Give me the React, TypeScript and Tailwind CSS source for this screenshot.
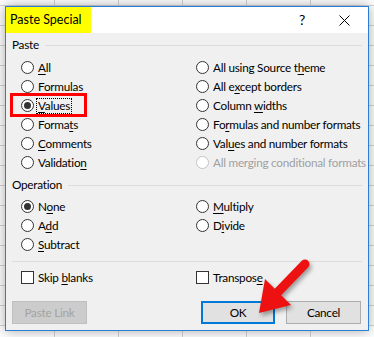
import React from "react";

type Opt = { pre: string; key?: string; post?: string; checked?: boolean; disabled?: boolean; focus?: boolean; boxed?: boolean };

function Label({ pre, keyChar, post }: { pre: string; keyChar?: string; post?: string }) {
  return (
    <>
      {pre}
      {keyChar && <u className="underline underline-offset-[2px] decoration-1">{keyChar}</u>}
      {post}
    </>
  );
}

function Radio({ opt }: { opt: Opt }) {
  return (
    <div className="relative flex items-center h-[19px]">
      {opt.boxed && (
        <span className="absolute left-[-11px] top-[-3px] w-[77px] h-[24px] border-[3px] border-[#ff0000] pointer-events-none" />
      )}
      <span
        className={
          "w-[13px] h-[13px] rounded-full border flex items-center justify-center bg-white shrink-0 " +
          (opt.disabled ? "border-[#c4c4c4]" : "border-[#333333]")
        }
      >
        {opt.checked && <span className="w-[7px] h-[7px] rounded-full bg-[#333333]" />}
      </span>
      <span
        className={
          "ml-[2px] px-[1px] leading-[14px] whitespace-nowrap border border-dotted " +
          (opt.focus ? "border-black" : "border-transparent") +
          (opt.disabled ? " text-[#a0a0a0]" : " text-black")
        }
      >
        <Label pre={opt.pre} keyChar={opt.key} post={opt.post} />
      </span>
    </div>
  );
}

function Group({ title, children }: { title: string; children: React.ReactNode }) {
  return (
    <div>
      <div className="flex items-center h-[16px]">
        <span className="text-black pr-[6px]">{title}</span>
        <span className="flex-1 h-px bg-[#dcdcdc]" />
      </div>
      {children}
    </div>
  );
}

const pasteLeft: Opt[] = [
  { pre: "", key: "A", post: "ll" },
  { pre: "", key: "F", post: "ormulas" },
  { pre: "", key: "V", post: "alues", checked: true, focus: true, boxed: true },
  { pre: "Forma", key: "t", post: "s" },
  { pre: "", key: "C", post: "omments" },
  { pre: "Validatio", key: "n", post: "" },
];

const pasteRight: Opt[] = [
  { pre: "All using Source t", key: "h", post: "eme" },
  { pre: "All e", key: "x", post: "cept borders" },
  { pre: "Column ", key: "w", post: "idths" },
  { pre: "Fo", key: "r", post: "mulas and number formats" },
  { pre: "Val", key: "u", post: "es and number formats" },
  { pre: "All merging conditional formats", disabled: true },
];

const opLeft: Opt[] = [
  { pre: "N", key: "o", post: "ne", checked: true },
  { pre: "A", key: "d", post: "d" },
  { pre: "", key: "S", post: "ubtract" },
];

const opRight: Opt[] = [
  { pre: "", key: "M", post: "ultiply" },
  { pre: "D", key: "i", post: "vide" },
];

function Checkbox({ pre, k, post }: { pre: string; k: string; post: string }) {
  return (
    <div className="flex items-center h-[19px]">
      <span className="w-[13px] h-[13px] border border-[#333333] bg-white shrink-0" />
      <span className="ml-[4px] text-black whitespace-nowrap">
        <Label pre={pre} keyChar={k} post={post} />
      </span>
    </div>
  );
}

export default function App() {
  return (
    <div
      className="relative w-[374px] h-[337px] overflow-hidden bg-white pl-[5px] pt-[6px] bg-[linear-gradient(to_right,#d6d6d6_1px,transparent_1px),linear-gradient(to_bottom,#d6d6d6_1px,transparent_1px)] bg-[length:64px_20px] bg-[position:54px_5px]"
      style={{ fontFamily: 'Lato, "Liberation Sans", sans-serif' }}
    >
      <div className="w-[364px] h-[325px] border border-[#2a7fd4] bg-[#f0f0f0] shadow-[0_0_12px_rgba(0,0,0,0.35)] text-[11.75px] tracking-[-0.25px] flex flex-col">
        {/* title bar */}
        <div className="h-[26px] bg-white flex items-center shrink-0">
          <div className="h-full w-[85px] bg-[#ffff00] flex items-center pl-[4px] text-[12.5px] tracking-normal text-black whitespace-nowrap">Paste Special</div>
          <div className="flex-1" />
          <span className="text-[14px] text-black mr-[34px] leading-none">?</span>
          <svg width="11" height="11" viewBox="0 0 11 11" className="mr-[18px]">
            <path d="M0.5 0.5 L10.5 10.5 M10.5 0.5 L0.5 10.5" stroke="#000" strokeWidth="1" />
          </svg>
        </div>

        {/* body */}
        <div className="px-[6px] pt-[4px] flex flex-col">
          <Group title="Paste">
            <div className="grid grid-cols-[175px_1fr] pl-[9px] mt-[5px]">
              <div>{pasteLeft.map((o, i) => <Radio key={i} opt={o} />)}</div>
              <div>{pasteRight.map((o, i) => <Radio key={i} opt={o} />)}</div>
            </div>
          </Group>

          <div className="mt-[5px]">
            <Group title="Operation">
              <div className="grid grid-cols-[175px_1fr] pl-[9px] mt-[4px]">
                <div>{opLeft.map((o, i) => <Radio key={i} opt={o} />)}</div>
                <div>{opRight.map((o, i) => <Radio key={i} opt={o} />)}</div>
              </div>
            </Group>
          </div>

          <div className="h-px bg-[#dcdcdc] mt-[7px]" />

          <div className="grid grid-cols-[175px_1fr] pl-[9px] mt-[6px]">
            <Checkbox pre="Skip " k="b" post="lanks" />
            <Checkbox pre="Transpos" k="e" post="" />
          </div>

          <div className="flex items-center justify-between mt-[14px] pr-[1px]">
            <button className="w-[75px] h-[23px] bg-[#cccccc] border border-[#bfbfbf] text-[#a3a3a3] text-[11.75px]">
              Paste Link
            </button>
            <div className="flex gap-[11px]">
              <button className="w-[74px] h-[23px] bg-[#e1e1e1] border-2 border-[#0078d7] text-black text-[11.75px]">OK</button>
              <button className="w-[75px] h-[23px] bg-[#e1e1e1] border border-[#adadad] text-black text-[11.75px]">Cancel</button>
            </div>
          </div>
        </div>
      </div>

      {/* red arrow annotation */}
      <svg
        className="absolute left-0 top-0 pointer-events-none"
        width="374"
        height="337"
        style={{ filter: "drop-shadow(2px 3px 2px rgba(0,0,0,0.35))" }}
      >
        <line x1="305" y1="264" x2="276" y2="294" stroke="#ee1111" strokeWidth="9" strokeLinecap="round" />
        <polygon points="259,313 265,279 291,305" fill="#ee1111" />
      </svg>
    </div>
  );
}
